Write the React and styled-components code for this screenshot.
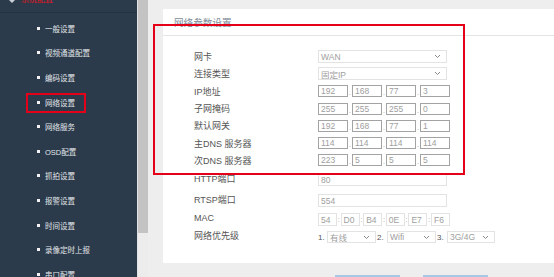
import styled, { createGlobalStyle } from "styled-components";

const GlobalStyle = createGlobalStyle`
  html, body {
    margin: 0;
    padding: 0;
    background: #eeeeee;
    overflow: hidden;
  }
  body {
    font-family: "Liberation Sans", "Noto Sans CJK SC", sans-serif;
  }
`;

const Page = styled.div`
  position: relative;
  display: flex;
  width: 554px;
  height: 277px;
  overflow: hidden;
`;

const Sidebar = styled.div`
  width: 137px;
  flex: none;
  background: #2c3b4b;
  display: flex;
  flex-direction: column;
  overflow: hidden;
`;

const SideHeader = styled.div`
  height: 12px;
  flex: none;
  border-bottom: 1px solid #253240;
  display: flex;
  align-items: flex-end;
  gap: 6px;
  padding-left: 9px;
  overflow: hidden;
`;

const HeaderText = styled.span`
  color: #e8141e;
  font-size: 8px;
  line-height: 8px;
  margin-bottom: 8px;
`;

const Caret = styled.span`
  width: 0;
  height: 0;
  border-left: 3px solid transparent;
  border-right: 3px solid transparent;
  border-top: 3px solid #c9d0d8;
  margin-bottom: 9px;
`;

const Menu = styled.ul`
  list-style: none;
  flex: none;
  margin: 0;
  padding: 3px 0 0 37px;
`;

const MenuItem = styled.li`
  height: 24.6px;
  display: flex;
  align-items: center;
  gap: 5px;
  color: #e2e6ea;
  font-size: 7.5px;
  white-space: nowrap;
`;

const Bullet = styled.span`
  width: 3px;
  height: 3px;
  background: #f2f2f2;
`;

const Scroll = styled.div`
  width: 10px;
  flex: none;
  background: #ececec;
  border-left: 1px solid #e2e2e2;
`;

const Thumb = styled.div`
  height: 233px;
  background: #c3c3c3;
`;

const Main = styled.div`
  flex: 1;
  padding: 9px 0 0 15px;
  display: flex;
  flex-direction: column;
`;

const Panel = styled.div`
  flex: none;
  background: #ffffff;
  height: 254px;
`;

const PanelTitle = styled.div`
  height: 26px;
  border-bottom: 1px solid #e4e4e4;
  padding-left: 11px;
  display: flex;
  align-items: center;
  font-size: 9.6px;
  color: #7d8b98;
`;

const Form = styled.div`
  padding: 12px 0 0 31px;
`;

const Row = styled.div`
  display: flex;
  align-items: center;
  height: ${(p) => p.$h || 17.3}px;
`;

const Label = styled.div`
  width: 124px;
  flex: none;
  font-size: 9px;
  color: #555;
  white-space: nowrap;
  margin-top: ${(p) => p.$up ? -3 : 0}px;
`;

const Field = styled.div`
  box-sizing: border-box;
  width: ${(p) => p.$w}px;
  height: ${(p) => p.$h || 13}px;
  border: 1px solid ${(p) => p.$dark ? "#a3a3a3" : "#e3e3e3"};
  background: #fff;
  display: flex;
  align-items: center;
  justify-content: space-between;
  padding: 0 5px 0 2px;
  font-size: 8.5px;
  color: #9e9e9e;
  flex: none;
  white-space: nowrap;
`;

const Group = styled.div`
  display: flex;
  align-items: center;
`;

const Sep = styled.span`
  width: ${(p) => p.$w}px;
  text-align: center;
  font-size: 7px;
  color: #999;
  align-self: ${(p) => p.$low ? "flex-end" : "center"};
  line-height: 8px;
`;

const Prio = styled.span`
  font-size: 8px;
  color: #555;
  width: ${(p) => p.$w}px;
  flex: none;
`;

const ButtonBar = styled.div`
  display: flex;
  flex: none;
  gap: 23px;
  padding: 12px 0 0 172px;
`;

const Button = styled.div`
  width: 65px;
  height: 20px;
  background: #d3e4f4;
  border-top: 2px solid #a8c7e6;
`;

const Highlight = styled.div`
  position: absolute;
  left: ${(p) => p.$x}px;
  top: ${(p) => p.$y}px;
  width: ${(p) => p.$w}px;
  height: ${(p) => p.$h}px;
  box-sizing: border-box;
  border: 2px solid #e5001a;
  pointer-events: none;
`;

const Chevron = () => (
  <svg width="7" height="5" viewBox="0 0 7 5">
    <path d="M1 1 L3.5 3.5 L6 1" fill="none" stroke="#8a8a8a" strokeWidth="1" />
  </svg>
);

const menu = [
  "一般设置",
  "视频通道配置",
  "编码设置",
  "网络设置",
  "网络服务",
  "OSD配置",
  "抓拍设置",
  "报警设置",
  "时间设置",
  "录像定时上报",
  "串口配置",
];

function IpField({ parts }) {
  return (
    <Group>
      {parts.map((v, i) => (
        <Group key={i}>
          {i > 0 && <Sep $w={4} $low>.</Sep>}
          <Field $w={30} $h={12} $dark>{v}</Field>
        </Group>
      ))}
    </Group>
  );
}

function Select({ w, value, h }) {
  return (
    <Field $w={w} $h={h || 13}>
      <span>{value}</span>
      <Chevron />
    </Field>
  );
}

export default function App() {
  const mac = ["54", "D0", "B4", "0E", "E7", "F6"];
  return (
    <>
      <GlobalStyle />
      <Page>
        <Sidebar>
          <SideHeader>
            <Caret />
            <HeaderText>系统配置</HeaderText>
          </SideHeader>
          <Menu>
            {menu.map((m) => (
              <MenuItem key={m}>
                <Bullet />
                {m}
              </MenuItem>
            ))}
          </Menu>
        </Sidebar>
        <Scroll>
          <Thumb />
        </Scroll>
        <Main>
          <Panel>
            <PanelTitle>网络参数设置</PanelTitle>
            <Form>
              <Row>
                <Label>网卡</Label>
                <Select w={129} value="WAN" />
              </Row>
              <Row>
                <Label>连接类型</Label>
                <Select w={129} value="固定IP" />
              </Row>
              <Row>
                <Label>IP地址</Label>
                <IpField parts={["192", "168", "77", "3"]} />
              </Row>
              <Row>
                <Label>子网掩码</Label>
                <IpField parts={["255", "255", "255", "0"]} />
              </Row>
              <Row>
                <Label>默认网关</Label>
                <IpField parts={["192", "168", "77", "1"]} />
              </Row>
              <Row>
                <Label>主DNS 服务器</Label>
                <IpField parts={["114", "114", "114", "114"]} />
              </Row>
              <Row>
                <Label>次DNS 服务器</Label>
                <IpField parts={["223", "5", "5", "5"]} />
              </Row>
              <Row $h={21}>
                <Label $up>HTTP端口</Label>
                <Field $w={129}>80</Field>
              </Row>
              <Row $h={21}>
                <Label $up>RTSP端口</Label>
                <Field $w={129}>554</Field>
              </Row>
              <Row $h={17.5}>
                <Label $up>MAC</Label>
                <Group>
                  {mac.map((v, i) => (
                    <Group key={v}>
                      {i > 0 && <Sep $w={3.6}>:</Sep>}
                      <Field $w={19}>{v}</Field>
                    </Group>
                  ))}
                </Group>
              </Row>
              <Row $h={17.5}>
                <Label $up>网络优先级</Label>
                <Group>
                  <Prio $w={9}>1.</Prio>
                  <Select w={49} h={12} value="有线" />
                  <Prio $w={10} style={{ marginLeft: 1 }}>2.</Prio>
                  <Select w={49} h={12} value="Wifi" />
                  <Prio $w={10} style={{ marginLeft: 1 }}>3.</Prio>
                  <Select w={48} h={12} value="3G/4G" />
                </Group>
              </Row>
            </Form>
          </Panel>
          <ButtonBar>
            <Button />
            <Button />
          </ButtonBar>
        </Main>
        <Highlight $x={26} $y={93} $w={60} $h={20} />
        <Highlight $x={153} $y={24} $w={312} $h={151} />
      </Page>
    </>
  );
}
